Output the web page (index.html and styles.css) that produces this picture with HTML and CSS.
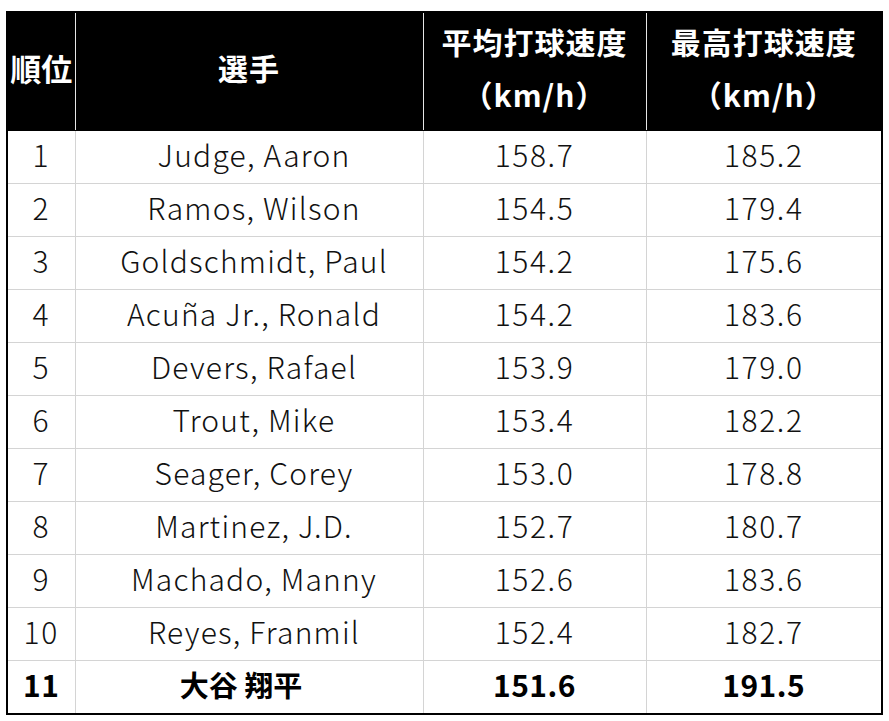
FILE: index.html
```html
<!DOCTYPE html>
<html lang="ja">
<head>
<meta charset="utf-8">
<link rel="stylesheet" href="styles.css">
</head>
<body>
<table class="rank">
  <colgroup>
    <col class="c-rank">
    <col class="c-name">
    <col class="c-avg">
    <col class="c-max">
  </colgroup>
  <thead>
    <tr>
      <th class="h-rank">順位</th>
      <th>選手</th>
      <th>平均打球速度<br>（km/h）</th>
      <th>最高打球速度<br>（km/h）</th>
    </tr>
  </thead>
  <tbody>
    <tr><td class="num">1</td><td class="name">Judge, Aaron</td><td class="num">158.7</td><td class="num">185.2</td></tr>
    <tr><td class="num">2</td><td class="name">Ramos, Wilson</td><td class="num">154.5</td><td class="num">179.4</td></tr>
    <tr><td class="num">3</td><td class="name">Goldschmidt, Paul</td><td class="num">154.2</td><td class="num">175.6</td></tr>
    <tr><td class="num">4</td><td class="name">Acuña Jr., Ronald</td><td class="num">154.2</td><td class="num">183.6</td></tr>
    <tr><td class="num">5</td><td class="name">Devers, Rafael</td><td class="num">153.9</td><td class="num">179.0</td></tr>
    <tr><td class="num">6</td><td class="name">Trout, Mike</td><td class="num">153.4</td><td class="num">182.2</td></tr>
    <tr><td class="num">7</td><td class="name">Seager, Corey</td><td class="num">153.0</td><td class="num">178.8</td></tr>
    <tr><td class="num">8</td><td class="name">Martinez, J.D.</td><td class="num">152.7</td><td class="num">180.7</td></tr>
    <tr><td class="num">9</td><td class="name">Machado, Manny</td><td class="num">152.6</td><td class="num">183.6</td></tr>
    <tr><td class="num">10</td><td class="name">Reyes, Franmil</td><td class="num">152.4</td><td class="num">182.7</td></tr>
    <tr class="hl"><td class="num">11</td><td class="name jp">大谷 翔平</td><td class="num">151.6</td><td class="num">191.5</td></tr>
  </tbody>
</table>
</body>
</html>
```

FILE: styles.css
```css
html, body {
  margin: 0;
  padding: 0;
  background: #ffffff;
}

body {
  padding: 11px 0 0 6px;
  font-family: "Noto Sans CJK JP", "Noto Sans", sans-serif;
}

.rank {
  border-collapse: collapse;
  table-layout: fixed;
  width: 875px;
  border: 2px solid #000;
}

.c-rank { width: 68px; }
.c-name { width: 348px; }
.c-avg { width: 223px; }
.c-max { width: 236px; }

.rank th {
  background: #000;
  color: #fff;
  font-weight: 700;
  font-size: 30px;
  letter-spacing: 1px;
  line-height: 53px;
  height: 109px;
  padding: 0 0 8px 0;
  text-align: center;
  text-spacing-trim: space-all;
  border-left: 1px solid #e6e6e6;
  border-right: 1px solid #e6e6e6;
  border-top: 2px solid #000;
  border-bottom: 1px solid #000;
  white-space: nowrap;
}

.rank th.h-rank {
  border-left: 2px solid #000;
  letter-spacing: 0;
  font-size: 31px;
}

.rank td {
  height: 46px;
  padding: 0 0 6px 0;
  text-align: center;
  font-size: 30px;
  font-weight: 300;
  line-height: 46px;
  color: #111;
  border: 1px solid #d4d4d4;
  white-space: nowrap;
}

.rank td.name {
  letter-spacing: 1.2px;
  padding-left: 10px;
}
.rank td.num { letter-spacing: 1.6px; }

.rank tr td:first-child { border-left: 2px solid #000; }
.rank tr td:last-child { border-right: 2px solid #000; }
.rank tbody tr:last-child td { border-bottom: 2px solid #000; }

.rank tr.hl td {
  font-weight: 700;
  color: #000;
  letter-spacing: 0.5px;
}

.rank tr.hl td.jp {
  font-size: 29px;
  letter-spacing: 0;
  padding-left: 8px;
  padding-right: 24px;
}
```
